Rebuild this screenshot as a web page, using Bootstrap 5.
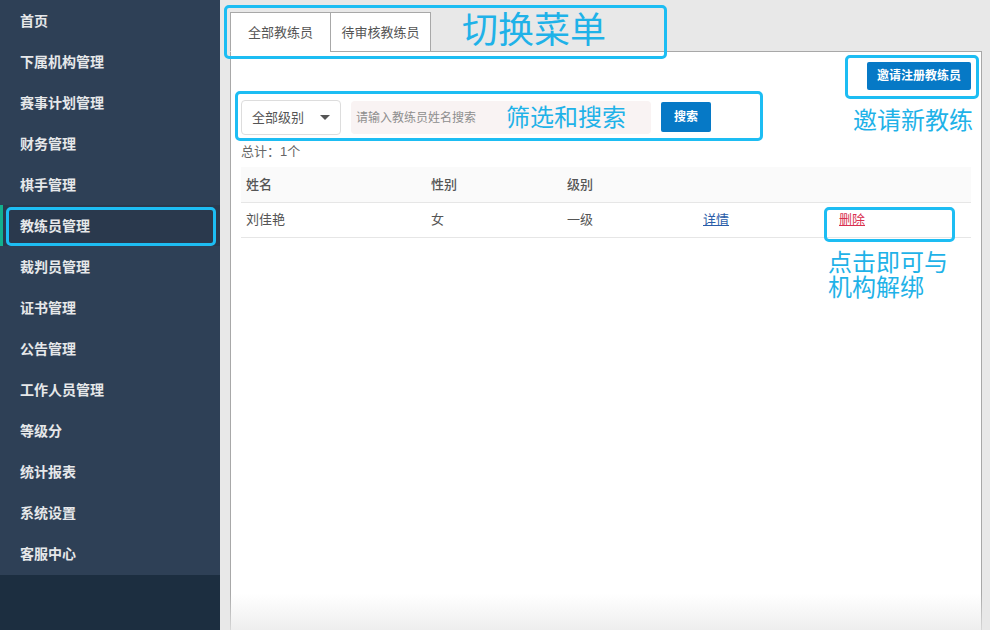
<!DOCTYPE html>
<html lang="zh-CN">
<head>
<meta charset="utf-8">
<title>教练员管理</title>
<link rel="stylesheet" href="https://cdn.jsdelivr.net/npm/bootstrap@5.3.0/dist/css/bootstrap.min.css">
<style>
html,body{height:630px;overflow:hidden}
body{font-family:"Liberation Sans","Noto Sans CJK SC",sans-serif;font-size:13px;color:#555;background:#e8e8e8;position:relative}
.shell{height:630px}
.side{width:220px;background:#1c2e40;flex:none}
.side-menu{background:#2e4056;padding:0;margin:0;list-style:none;height:575px}
.side-item{height:41px;line-height:43px;padding-left:20px;font-size:14px;font-weight:700;color:#e6e8ea;position:relative}
.side-active{background:#2a394d}
.side-active::before{content:"";position:absolute;left:0;top:0;bottom:0;width:3px;background:#13b08e}
.main{width:770px;padding:12px 8px 0 10px;min-width:0;position:relative}
.tabbar{height:40px;position:relative;z-index:1}
.tabitem{height:40px;line-height:40px;width:100px;text-align:center;background:#fff;border:1px solid #a8a8a8;color:#555;text-decoration:none;font-size:13px}
.tabitem.on{border-bottom-color:#fff;border-right:0}
.tabitem+.tabitem{width:101px}
.panel-box{height:600px;background:#fff;border:1px solid #a8a8a8;padding:10px 10px 0 10px;margin-top:-1px}
.btn-blue{background:#0679c6;color:#fff;font-size:12px;font-weight:700;border:0;border-radius:2px;height:28px;line-height:28px;padding:0;width:104px}
.btn-find{width:50px;height:30px;line-height:30px;font-size:12px;margin-left:2px;align-self:flex-start;margin-top:2px}
.filter{margin-top:10px;height:35px}
.level{width:100px;height:35px;border:1px solid #ddd;border-radius:4px;padding:0 10px;color:#555;font-size:13px}
.caret-down{width:0;height:0;border-left:5px solid transparent;border-right:5px solid transparent;border-top:5px solid #555}
.kw{width:300px;height:33px;background:#f9f3f3;border:0;border-radius:4px;padding:0 5px;font-size:12px;color:#555;margin-left:2px}
.kw::placeholder{color:#8e8e8e;opacity:1}
.count{margin-top:8px;height:18px;line-height:18px;font-size:13px;color:#666}
.grid-tb{width:730px;margin:6px 0 0;table-layout:fixed;border-collapse:collapse;font-size:13px;color:#555}
.grid-tb th{height:35px;background:#fafafa;font-weight:500;padding:0 5px;border-bottom:1px solid #e6e6e6;color:#555}
.grid-tb td{height:35px;padding:0 5px;border-bottom:1px solid #e6e6e6}
.lk-blue{color:#2a5ca8}
.lk-red{color:#d9304f}
.fade-bottom{position:absolute;left:0;right:0;bottom:0;height:36px;background:linear-gradient(rgba(232,232,232,0),rgba(232,232,232,.75));pointer-events:none}
.mark-box{position:absolute;border:3px solid #1dbdf3;border-radius:5px;pointer-events:none}
.note{position:absolute;color:#1fb2e8;font-family:"Noto Sans CJK SC",sans-serif;font-weight:400;white-space:nowrap;line-height:1;pointer-events:none}
.note-line{display:block;height:25px;line-height:25px}
</style>
</head>
<body>
<div class="shell d-flex">
  <nav class="side">
    <ul class="side-menu">
      <li class="side-item">首页</li>
      <li class="side-item">下属机构管理</li>
      <li class="side-item">赛事计划管理</li>
      <li class="side-item">财务管理</li>
      <li class="side-item">棋手管理</li>
      <li class="side-item side-active">教练员管理</li>
      <li class="side-item">裁判员管理</li>
      <li class="side-item">证书管理</li>
      <li class="side-item">公告管理</li>
      <li class="side-item">工作人员管理</li>
      <li class="side-item">等级分</li>
      <li class="side-item">统计报表</li>
      <li class="side-item">系统设置</li>
      <li class="side-item">客服中心</li>
    </ul>
  </nav>
  <main class="main">
    <div class="tabbar d-flex">
      <a class="tabitem on" href="#">全部教练员</a>
      <a class="tabitem" href="#">待审核教练员</a>
    </div>
    <section class="panel-box">
      <div class="d-flex justify-content-end">
        <button class="btn btn-blue" type="button">邀请注册教练员</button>
      </div>
      <div class="filter d-flex align-items-center gap-2">
        <div class="level d-flex align-items-center justify-content-between"><span>全部级别</span><span class="caret-down"></span></div>
        <input class="kw" type="text" placeholder="请输入教练员姓名搜索">
        <button class="btn btn-blue btn-find" type="button">搜索</button>
      </div>
      <div class="count">总计：1个</div>
      <table class="grid-tb">
        <colgroup><col style="width:185px"><col style="width:136px"><col style="width:136px"><col style="width:136px"><col style="width:137px"></colgroup>
        <thead><tr><th>姓名</th><th>性别</th><th>级别</th><th></th><th></th></tr></thead>
        <tbody><tr><td>刘佳艳</td><td>女</td><td>一级</td><td><a class="lk-blue" href="#">详情</a></td><td><a class="lk-red" href="#">删除</a></td></tr></tbody>
      </table>
    </section>
    <div class="fade-bottom"></div>
  </main>
</div>
<div class="mark-box" style="left:224px;top:5px;width:443px;height:54px"></div>
<div class="mark-box" style="left:235px;top:91px;width:528px;height:50px"></div>
<div class="mark-box" style="left:845px;top:55px;width:134px;height:44px"></div>
<div class="mark-box" style="left:6px;top:207px;width:210px;height:39px"></div>
<div class="mark-box" style="left:824px;top:207px;width:131px;height:35px"></div>
<div class="note" style="left:462px;top:9px;font-size:36px">切换菜单</div>
<div class="note" style="left:506px;top:104px;font-size:24px">筛选和搜索</div>
<div class="note" style="left:853px;top:107px;font-size:24px">邀请新教练</div>
<div class="note" style="left:828px;top:248px;font-size:24px"><span class="note-line">点击即可与</span><span class="note-line">机构解绑</span></div>
<script src="https://cdn.jsdelivr.net/npm/bootstrap@5.3.0/dist/js/bootstrap.bundle.min.js"></script>
</body>
</html>
